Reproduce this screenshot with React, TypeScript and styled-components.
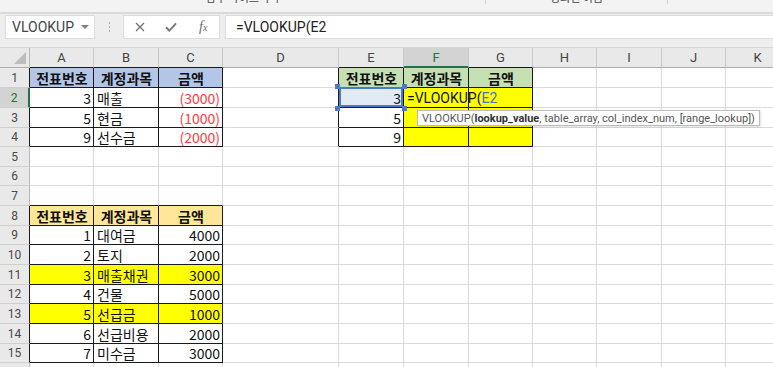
import React from 'react';
import styled, { createGlobalStyle } from 'styled-components';

const GlobalStyle = createGlobalStyle`
  html, body {
    margin: 0;
    padding: 0;
    background: #ffffff;
    overflow: hidden;
  }
  body {
    font-family: "Noto Sans CJK KR", "Noto Sans", sans-serif;
  }
`;

// column widths (row header + A..K) and row heights (col header + rows 1..16)
const COLS = [30, 64, 65, 64, 116, 65, 65, 64, 64, 65, 64, 64];
const ROWS = [20, 20, 20, 20, 19, 20, 19, 20, 20, 19, 20, 20, 19, 20, 20, 19, 20];
const LETTERS = ['', 'A', 'B', 'C', 'D', 'E', 'F', 'G', 'H', 'I', 'J', 'K'];

const BLUE = '#b4c6e7';
const GREEN = '#c6e0b4';
const ORANGE = '#ffe699';
const YELLOW = '#ffff00';
const REF_BG = '#e2eaf6';
const GRID = '#dadada';
const INK = '#1a1a1a';
const EXCEL_GREEN = '#217346';

type CellSpec = {
  text?: React.ReactNode;
  align?: 'left' | 'right' | 'center';
  bold?: boolean;
  fill?: string;
  tone?: string;
  lift?: number;
  refMark?: boolean;
};

const TABLES = [
  { r0: 1, r1: 4, c0: 1, c1: 3 },
  { r0: 1, r1: 4, c0: 5, c1: 7 },
  { r0: 8, r1: 15, c0: 1, c1: 3 },
];

const inTable = (r: number, c: number) =>
  TABLES.some(t => r >= t.r0 && r <= t.r1 && c >= t.c0 && c <= t.c1);

const cells: Record<string, CellSpec> = {};
const put = (r: number, c: number, spec: CellSpec) => {
  cells[`${r}-${c}`] = spec;
};

const putHeader = (r: number, c0: number, fill: string) => {
  ['전표번호', '계정과목', '금액'].forEach((label, i) =>
    put(r, c0 + i, { text: label, bold: true, align: 'center', fill })
  );
};

// 표 1
putHeader(1, 1, BLUE);
[
  ['3', '매출', '(3000)'],
  ['5', '현금', '(1000)'],
  ['9', '선수금', '(2000)'],
].forEach(([no, name, amt], i) => {
  put(2 + i, 1, { text: no, align: 'right' });
  put(2 + i, 2, { text: name });
  put(2 + i, 3, { text: amt, align: 'right', tone: '#ff3b3b' });
});

// 표 2
putHeader(1, 5, GREEN);
['3', '5', '9'].forEach((no, i) => {
  put(2 + i, 5, { text: no, align: 'right', fill: i === 0 ? REF_BG : undefined, refMark: i === 0, lift: i === 0 ? 2 : 0 });
  put(2 + i, 6, { fill: YELLOW });
  put(2 + i, 7, { fill: YELLOW });
});

// 표 3
putHeader(8, 1, ORANGE);
[
  ['1', '대여금', '4000', false],
  ['2', '토지', '2000', false],
  ['3', '매출채권', '3000', true],
  ['4', '건물', '5000', false],
  ['5', '선급금', '1000', true],
  ['6', '선급비용', '2000', false],
  ['7', '미수금', '3000', false],
].forEach(([no, name, amt, hit], i) => {
  const fill = hit ? YELLOW : undefined;
  put(9 + i, 1, { text: no as string, align: 'right', fill });
  put(9 + i, 2, { text: name as string, fill });
  put(9 + i, 3, { text: amt as string, align: 'right', fill });
});

// ---------- ribbon + formula bar ----------

const Page = styled.div`
  width: 773px;
  height: 367px;
  overflow: hidden;
  background: #ffffff;
`;

const Ribbon = styled.div`
  display: flex;
  height: 14px;
  box-sizing: border-box;
  background: #f3f3f3;
  border-bottom: 2px solid #dadada;
  overflow: hidden;
`;

const RibbonGroup = styled.div<{ $width: number; $divider?: boolean }>`
  flex: 0 0 ${p => p.$width}px;
  display: flex;
  justify-content: center;
  border-right: ${p => (p.$divider ? '1px solid #d2d2d2' : 'none')};
  height: 4px;
`;

const RibbonLabel = styled.span`
  font-size: 11px;
  line-height: 11px;
  margin-top: -8px;
  color: #444444;
  white-space: nowrap;
`;

const FormulaBar = styled.div`
  display: flex;
  align-items: flex-start;
  height: 34px;
  box-sizing: border-box;
  padding: 1px 0 0 5px;
  background: #eeeeee;
  border-bottom: 1px solid #d6d6d6;
`;

const NameBox = styled.div`
  flex: 0 0 90px;
  height: 24px;
  box-sizing: border-box;
  display: flex;
  align-items: center;
  justify-content: space-between;
  padding: 0 5px 0 6px;
  background: #ffffff;
  border: 1px solid #dcdcdc;
  font-family: Roboto, "Noto Sans", sans-serif;
  font-size: 14px;
  color: #444444;
`;

const Caret = styled.span`
  width: 0;
  height: 0;
  border-left: 4px solid transparent;
  border-right: 4px solid transparent;
  border-top: 4px solid #808080;
`;

const Grip = styled.div`
  flex: 0 0 28px;
  height: 24px;
  display: flex;
  flex-direction: column;
  align-items: center;
  justify-content: center;
  gap: 2px;
`;

const GripDot = styled.span`
  width: 1px;
  height: 2px;
  background: #a8a8a8;
`;

const FnButtons = styled.div`
  flex: 0 0 97px;
  height: 24px;
  box-sizing: border-box;
  display: grid;
  grid-template-columns: repeat(3, 1fr);
  align-items: center;
  justify-items: center;
  background: #ffffff;
  border: 1px solid #dcdcdc;
`;

const FxMark = styled.span`
  font-family: "Liberation Serif", serif;
  font-style: italic;
  font-size: 14px;
  color: #6a6a6a;

  small {
    font-size: 10px;
  }
`;

const FormulaInput = styled.div`
  flex: 1;
  height: 24px;
  box-sizing: border-box;
  margin-left: 5px;
  padding-left: 10px;
  display: flex;
  align-items: center;
  background: #ffffff;
  border: 1px solid #dcdcdc;
  border-right: none;
  font-family: Roboto, "Noto Sans", sans-serif;
  font-size: 14px;
  color: #222222;
`;

// ---------- sheet ----------

const Sheet = styled.div`
  position: relative;
  display: grid;
  grid-template-columns: ${COLS.map(c => `${c}px`).join(' ')};
  grid-template-rows: ${ROWS.map(r => `${r}px`).join(' ')};
`;

const Corner = styled.div`
  box-sizing: border-box;
  display: flex;
  align-items: flex-end;
  justify-content: flex-end;
  padding: 0 3px 3px 0;
  background: #e9e9e9;
  border-right: 1px solid #b8b8b8;
  border-bottom: 1px solid #ababab;
`;

const CornerMark = styled.span`
  width: 0;
  height: 0;
  border-left: 12px solid transparent;
  border-bottom: 12px solid #bdbdbd;
`;

const ColHead = styled.div<{ $active: boolean; $bb: string }>`
  box-sizing: border-box;
  display: flex;
  align-items: center;
  justify-content: center;
  background: ${p => (p.$active ? '#d3d3d3' : '#e9e9e9')};
  border-right: 1px solid #c8c8c8;
  border-bottom: ${p => (p.$active ? `2px solid ${EXCEL_GREEN}` : `1px solid ${p.$bb}`)};
  font-family: Roboto, "Noto Sans", sans-serif;
  font-size: 13px;
  color: ${p => (p.$active ? EXCEL_GREEN : '#444444')};
`;

const RowHead = styled.div<{ $active: boolean; $br: string }>`
  box-sizing: border-box;
  display: flex;
  align-items: center;
  justify-content: center;
  background: ${p => (p.$active ? '#d3d3d3' : '#e9e9e9')};
  border-right: ${p => (p.$active ? `2px solid ${EXCEL_GREEN}` : `1px solid ${p.$br}`)};
  border-bottom: 1px solid #cfcfcf;
  font-family: Roboto, "Noto Sans", sans-serif;
  font-size: 12px;
  color: ${p => (p.$active ? EXCEL_GREEN : '#4a4a4a')};
`;

const Cell = styled.div<{
  $fill: string;
  $align: string;
  $bold: boolean;
  $tone: string;
  $br: string;
  $bb: string;
  $lift: number;
}>`
  position: relative;
  box-sizing: border-box;
  display: flex;
  align-items: center;
  justify-content: ${p => (p.$align === 'right' ? 'flex-end' : p.$align === 'center' ? 'center' : 'flex-start')};
  padding: 0 2px 0 3px;
  background: ${p => p.$fill};
  border-right: 1px solid ${p => p.$br};
  border-bottom: 1px solid ${p => p.$bb};
  color: ${p => p.$tone};
  font-size: 14px;
  font-weight: ${p => (p.$bold ? 700 : 400)};
  white-space: nowrap;
  z-index: ${p => (p.$lift ? p.$lift : 'auto')};
`;

const FormulaText = styled.span`
  font-family: Roboto, "Noto Sans", sans-serif;
  font-size: 14px;
  color: #111111;
`;

const RefText = styled.span`
  color: #3f73c4;
`;

const RefFrame = styled.span`
  position: absolute;
  inset: -1px 0 0 0;
  border: 2px solid #4a7bc8;
  pointer-events: none;
`;

const Handle = styled.span<{ $x: 'l' | 'r'; $y: 't' | 'b' }>`
  position: absolute;
  width: 5px;
  height: 5px;
  background: #4a7bc8;
  ${p => (p.$x === 'l' ? 'left: -4px;' : 'right: -4px;')}
  ${p => (p.$y === 't' ? 'top: -4px;' : 'bottom: -4px;')}
`;

const Tip = styled.div`
  position: absolute;
  left: 417px;
  top: 62px;
  height: 16px;
  box-sizing: border-box;
  padding: 0 4px;
  display: flex;
  align-items: center;
  background: #ffffff;
  border: 1px solid #bcbcbc;
  box-shadow: 1px 1px 2px rgba(0, 0, 0, 0.12);
  font-family: Roboto, "Noto Sans", sans-serif;
  font-size: 11px;
  color: #555555;
  white-space: nowrap;
  z-index: 5;

  b {
    color: #333333;
  }
`;

const CloseIcon = () => (
  <svg width="10" height="10" viewBox="0 0 10 10">
    <path d="M1 1 L9 9 M9 1 L1 9" stroke="#707070" strokeWidth="1.3" fill="none" />
  </svg>
);

const CheckIcon = () => (
  <svg width="12" height="10" viewBox="0 0 12 10">
    <path d="M1 5.2 L4.4 8.6 L11 1.4" stroke="#7a7a7a" strokeWidth="2" fill="none" />
  </svg>
);

const renderCell = (r: number, c: number) => {
  const key = `${r}-${c}`;
  if (r === 0 && c === 0) {
    return (
      <Corner key={key}>
        <CornerMark />
      </Corner>
    );
  }
  if (r === 0) {
    return (
      <ColHead key={key} $active={c === 6} $bb={inTable(1, c) ? INK : '#ababab'}>
        {LETTERS[c]}
      </ColHead>
    );
  }
  if (c === 0) {
    return (
      <RowHead key={key} $active={r === 2} $br={inTable(r, 1) ? INK : '#b8b8b8'}>
        {r}
      </RowHead>
    );
  }

  const spec = cells[key] || {};
  const br = inTable(r, c) || inTable(r, c + 1) ? INK : GRID;
  const bb = inTable(r, c) || inTable(r + 1, c) ? INK : GRID;
  const isEditing = r === 2 && c === 6;

  return (
    <Cell
      key={key}
      $fill={spec.fill || '#ffffff'}
      $align={spec.align || 'left'}
      $bold={!!spec.bold}
      $tone={spec.tone || '#111111'}
      $br={br}
      $bb={bb}
      $lift={isEditing ? 1 : spec.lift || 0}
    >
      {isEditing ? (
        <FormulaText>
          =VLOOKUP(<RefText>E2</RefText>
        </FormulaText>
      ) : (
        spec.text
      )}
      {spec.refMark && (
        <>
          <RefFrame />
          <Handle $x="l" $y="t" />
          <Handle $x="r" $y="t" />
          <Handle $x="l" $y="b" />
          <Handle $x="r" $y="b" />
        </>
      )}
    </Cell>
  );
};

const App: React.FC = () => {
  return (
    <Page>
      <GlobalStyle />
      <Ribbon>
        <RibbonGroup $width={485} $divider>
          <RibbonLabel>함수 라이브러리</RibbonLabel>
        </RibbonGroup>
        <RibbonGroup $width={181} $divider>
          <RibbonLabel>정의된 이름</RibbonLabel>
        </RibbonGroup>
        <RibbonGroup $width={200} />
      </Ribbon>

      <FormulaBar>
        <NameBox>
          VLOOKUP
          <Caret />
        </NameBox>
        <Grip>
          <GripDot />
          <GripDot />
          <GripDot />
        </Grip>
        <FnButtons>
          <CloseIcon />
          <CheckIcon />
          <FxMark>
            f<small>x</small>
          </FxMark>
        </FnButtons>
        <FormulaInput>=VLOOKUP(E2</FormulaInput>
      </FormulaBar>

      <Sheet>
        {ROWS.map((_, r) => COLS.map((__, c) => renderCell(r, c)))}
        <Tip>
          VLOOKUP(<b>lookup_value</b>, table_array, col_index_num, [range_lookup])
        </Tip>
      </Sheet>
    </Page>
  );
};

export default App;
